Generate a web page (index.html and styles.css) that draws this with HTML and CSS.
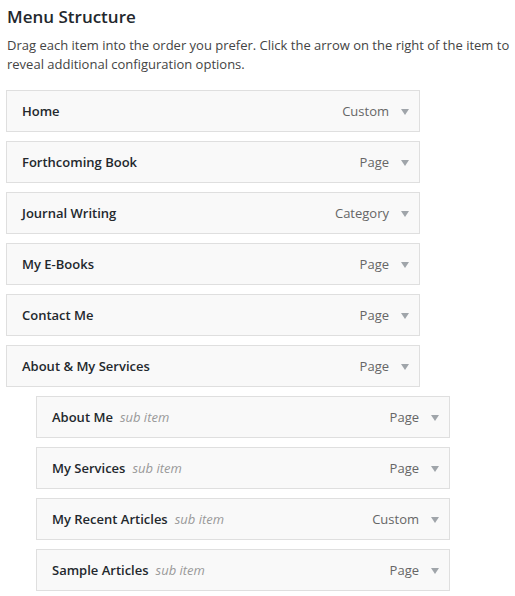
FILE: index.html
```html
<!DOCTYPE html>
<html>
<head>
<meta charset="utf-8">
<link rel="stylesheet" href="styles.css">
</head>
<body>
<div class="page">
  <h3 class="title">Menu Structure</h3>
  <p class="desc">Drag each item into the order you prefer. Click the arrow on the right of the item to reveal additional configuration options.</p>
  <ul class="menu">
    <li class="item"><span class="name">Home</span><span class="type">Custom</span><span class="arrow"></span></li>
    <li class="item"><span class="name">Forthcoming Book</span><span class="type">Page</span><span class="arrow"></span></li>
    <li class="item"><span class="name">Journal Writing</span><span class="type">Category</span><span class="arrow"></span></li>
    <li class="item"><span class="name">My E-Books</span><span class="type">Page</span><span class="arrow"></span></li>
    <li class="item"><span class="name">Contact Me</span><span class="type">Page</span><span class="arrow"></span></li>
    <li class="item"><span class="name">About &amp; My Services</span><span class="type">Page</span><span class="arrow"></span></li>
    <li class="item sub"><span class="name">About Me</span><span class="subtag">sub item</span><span class="type">Page</span><span class="arrow"></span></li>
    <li class="item sub"><span class="name">My Services</span><span class="subtag">sub item</span><span class="type">Page</span><span class="arrow"></span></li>
    <li class="item sub"><span class="name">My Recent Articles</span><span class="subtag">sub item</span><span class="type">Custom</span><span class="arrow"></span></li>
    <li class="item sub"><span class="name">Sample Articles</span><span class="subtag">sub item</span><span class="type">Page</span><span class="arrow"></span></li>
  </ul>
</div>
</body>
</html>
```
FILE: styles.css
```css
html, body {
  margin: 0;
  padding: 0;
  background: #ffffff;
}
body {
  font-family: "Open Sans", "Liberation Sans", sans-serif;
  color: #444444;
}
.page {
  padding: 6px 5px 0 6px;
}
.title {
  margin: 0 0 0 1px;
  font-size: 17px;
  line-height: 22px;
  font-weight: 600;
  color: #23282d;
}
.desc {
  margin: 8px 0 0 1px;
  font-size: 13px;
  line-height: 18.5px;
  color: #444444;
}
.menu {
  list-style: none;
  margin: 17px 0 0 0;
  padding: 0;
  display: flex;
  flex-direction: column;
  gap: 9px;
}
.item {
  box-sizing: border-box;
  width: 414px;
  height: 42px;
  border: 1px solid #dfdfdf;
  background: #f9f9f9;
  display: flex;
  align-items: center;
  padding: 0 10px 0 15px;
  font-size: 13px;
}
.item.sub {
  margin-left: 30px;
}
.name {
  font-weight: 600;
  color: #23282d;
}
.subtag {
  margin-left: 7px;
  font-style: italic;
  color: #999999;
}
.type {
  margin-left: auto;
  color: #666666;
}
.arrow {
  margin-left: 12px;
  width: 0;
  height: 0;
  border-left: 4px solid transparent;
  border-right: 4px solid transparent;
  border-top: 6px solid #a0a5aa;
  margin-top: 2px;
}
```
